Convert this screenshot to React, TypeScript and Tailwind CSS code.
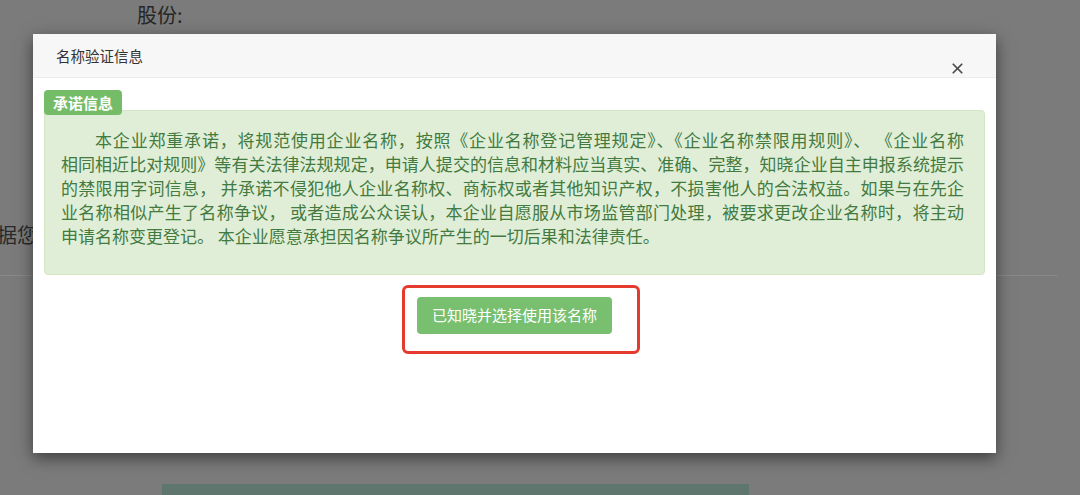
import { X } from "lucide-react";

const lines = [
	"本企业郑重承诺，将规范使用企业名称，按照《企业名称登记管理规定》、《企业名称禁限用规则》、 《企业名称",
	"相同相近比对规则》等有关法律法规规定，申请人提交的信息和材料应当真实、准确、完整，知晓企业自主申报系统提示",
	"的禁限用字词信息， 并承诺不侵犯他人企业名称权、商标权或者其他知识产权，不损害他人的合法权益。如果与在先企",
	"业名称相似产生了名称争议， 或者造成公众误认，本企业自愿服从市场监管部门处理，被要求更改企业名称时，将主动",
];

const lastLine =
	"申请名称变更登记。 本企业愿意承担因名称争议所产生的一切后果和法律责任。";

export default function App() {
	return (
		<div className="relative h-[495px] w-[1080px] overflow-hidden bg-[#7b7b7b] font-['Noto_Sans_CJK_SC',sans-serif]">
			{/* Page behind the overlay */}
			<div className="pl-[137px] pt-[3px] text-[20px] leading-[24px] text-[#262626]">
				股份:
			</div>
			<div className="mt-[195px] -ml-[3px] text-[20px] leading-[26px] text-[#2a2a2a]">
				据您
			</div>
			<div className="mt-[27px] h-px w-[1058px] bg-[#888888]" />
			<div className="mt-[208px] ml-[162px] h-[20px] w-[587px] bg-[#5f766f]" />

			{/* Modal */}
			<div className="absolute left-[33px] top-[34px] flex h-[419px] w-[963px] flex-col bg-white shadow-[0_5px_15px_rgba(0,0,0,0.5)]">
				<div className="flex h-[44px] shrink-0 items-start border-b border-[#ececec] bg-[#f7f7f7] pl-[23px] pr-[30px]">
					<span className="pt-[12px] text-[14.5px] leading-[20px] text-[#333333]">
						名称验证信息
					</span>
					<button
						type="button"
						className="ml-auto mt-[26px] text-[#4a4a4a]"
					>
						<X className="h-[17px] w-[17px]" strokeWidth={2.4} />
					</button>
				</div>

				<div className="px-[11px] pt-[12px]">
					<span className="relative z-10 block w-fit rounded-[4px] bg-[#74bc68] px-[9px] text-[15px] font-bold leading-[25px] text-white">
						承诺信息
					</span>
					<div className="-mt-[5px] rounded-[4px] border border-[#d3e6c4] bg-[#e0eed8] pb-[26px] pl-[16px] pr-[20px] pt-[17px] text-[17px] leading-[24px] text-[#437a3e]">
						{lines.map((line, i) => (
							<div
								key={line}
								className={`whitespace-nowrap text-justify [text-align-last:justify] ${i === 0 ? "pl-[34px]" : ""}`}
							>
								{line}
							</div>
						))}
						<div className="whitespace-nowrap">{lastLine}</div>
					</div>

					<div className="mt-[22px] flex justify-center">
						<div className="relative">
							<button
								type="button"
								className="h-[37px] rounded-[4px] bg-[#78bf6f] px-[15px] text-[15px] text-white"
							>
								已知晓并选择使用该名称
							</button>
							{/* red annotation frame */}
							<div className="pointer-events-none absolute -left-[15px] -right-[28px] -top-[12px] -bottom-[20px] rounded-[6px] border-[3px] border-[#e53a2e]" />
						</div>
					</div>
				</div>
			</div>
		</div>
	);
}
